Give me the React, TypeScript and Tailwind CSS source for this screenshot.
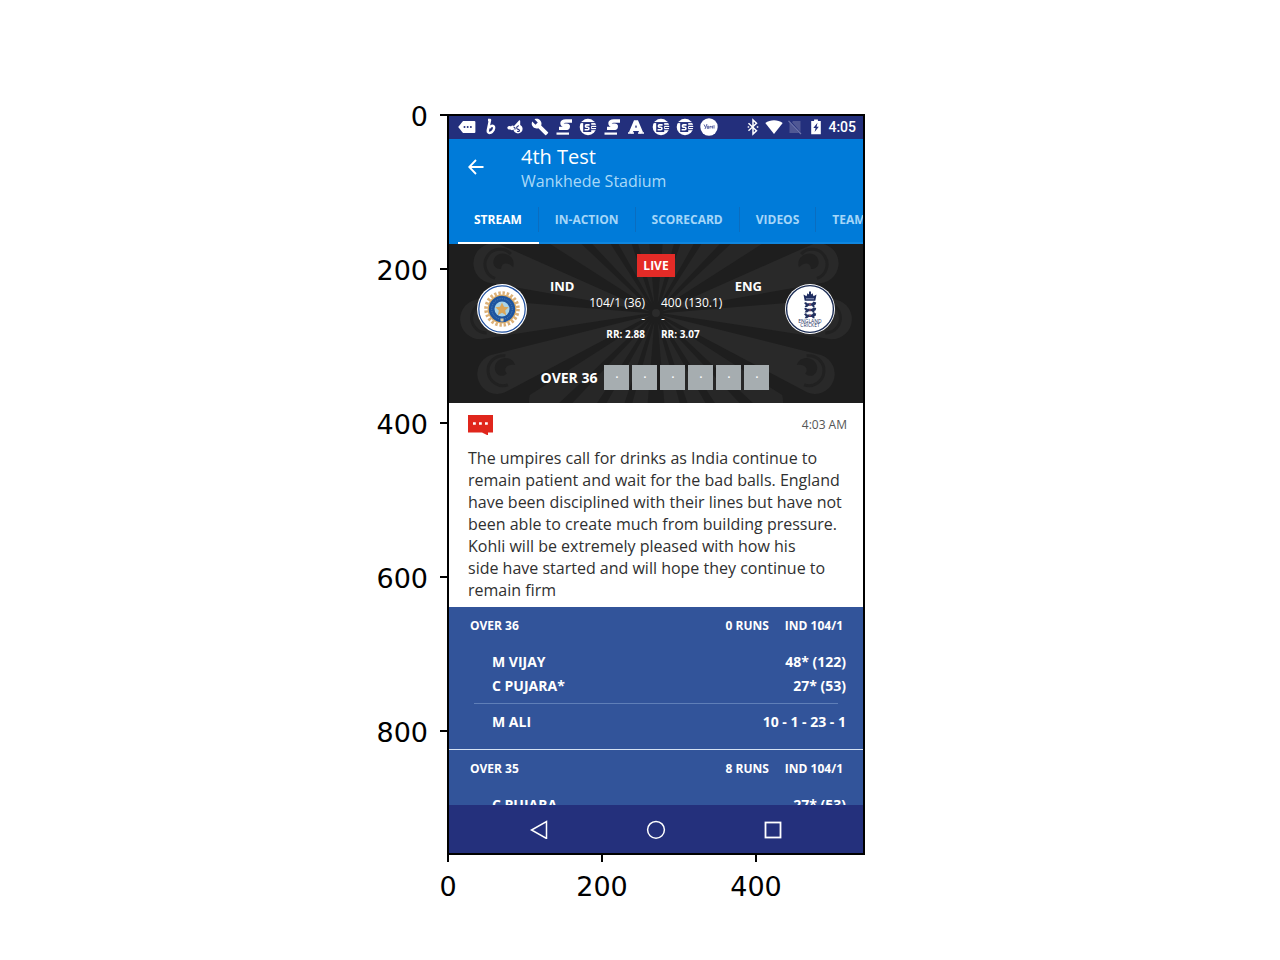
import React from "react";

const SANS = "font-['Open_Sans','Noto_Sans',sans-serif]";

const yTicks = [0, 200, 400, 600, 800];
const xTicks = [0, 200, 400];
const tabs = ["STREAM", "IN-ACTION", "SCORECARD", "VIDEOS", "TEAMS"];

function MessageIcon() {
  return (
    <svg viewBox="0 0 18 18" className="size-[18px]" fill="#fff">
      <path d="M5 3h11.400a1 1 0 0 1 1 1v10a1 1 0 0 1-1 1H5L.2 9z" />
      <g fill="#232f7c">
        <circle cx="6.500" cy="9" r="1" />
        <circle cx="9.700" cy="9" r="1" />
        <circle cx="12.900" cy="9" r="1" />
      </g>
    </svg>
  );
}

function BeatsIcon() {
  return (
    <svg viewBox="0 0 18 18" className="size-[18px]" fill="none" stroke="#fff" strokeWidth="2.500" strokeLinejoin="round">
      <path d="M6 2h2L5.800 12.500c-.4 2 1.200 2.800 2.800 2.200 2.600-.9 4.200-4.200 3.300-6.100-.9-1.700-3.300-.8-4.700 1.400" />
    </svg>
  );
}

function WeatherIcon() {
  return (
    <svg viewBox="0 0 18 18" className="size-[18px]" fill="#fff">
      <path d="M1.500 9c.8-1.200 2.300-1.400 3.400-.6.800-1 2.200-1.100 3.100-.3l5-5.600c.5-.5 1.200-.3 1.200.4v4c1.500.8 2.400 2.200 2.400 3.900 0 2.700-2 4.700-4.600 4.700-2.500 0-4.300-1.700-4.600-3.900-.9.900-2.300.8-3-.2C2.600 12 .9 10.700 1.500 9z" />
      <path d="M7.500 9c1.300.2 1.900 1.200 1.400 2.600M13 7.800c-2 .3-2.800 1.600-2 2.800.7 1 2.500.6 2.500 2 0 1-1.400 1.200-2.300.6" fill="none" stroke="#232f7c" strokeWidth="1.100" />
    </svg>
  );
}

function WrenchIcon() {
  return (
    <svg viewBox="0 0 24 24" className="size-[18px]" fill="#fff">
      <path d="M22.700 19l-9.100-9.100c.9-2.300.4-5-1.500-6.900-2-2-5-2.400-7.400-1.300L9 6 6 9 1.600 4.700C.4 7.100.9 10.100 2.900 12.100c1.900 1.900 4.600 2.400 6.900 1.500l9.100 9.100c.4.4 1 .4 1.400 0l2.300-2.300c.5-.4.5-1.100.1-1.400z" />
    </svg>
  );
}

function SlantSIcon() {
  return (
    <svg viewBox="0 0 18 18" className="size-[18px]" fill="none" stroke="#fff">
      <path d="M17 3h-6.200C8.500 3 7.200 3.700 7 5.100c-.2 1.300.7 2 2.400 2h2.200c1.300 0 1.900.5 1.700 1.500-.2 1.200-1.200 1.800-2.800 1.800H4" strokeWidth="3.400" />
      <path d="M1.500 15.600h12.500" strokeWidth="2.200" />
    </svg>
  );
}

function CoinSIcon() {
  return (
    <svg viewBox="0 0 18 18" className="size-[18px]">
      <circle cx="9" cy="9" r="8.300" fill="#fff" />
      <path d="M1.500 4.600h15M11.500 7.300H18M13 9.500h5M11.500 11.700H18" stroke="#232f7c" strokeWidth="1" />
      <rect x="4.200" y="4.700" width="8" height="9.300" fill="#232f7c" />
      <path d="M10.600 6.900H7.400c-1.300 0-1.300 2.300 0 2.300h1.400c1.500 0 1.500 2.600 0 2.600H5.600" fill="none" stroke="#fff" strokeWidth="1.600" />
    </svg>
  );
}

function LetterAIcon() {
  return (
    <svg viewBox="0 0 18 18" className="size-[18px]" fill="none" stroke="#fff">
      <path d="M3.600 15 8.200 4h1.600L14.400 15M5.500 11.300h7" strokeWidth="3.600" />
      <path d="M1 15h6M11 15h6" strokeWidth="1.600" />
    </svg>
  );
}

function DiscIcon() {
  return (
    <svg viewBox="0 0 18 18" className="size-[18px]">
      <circle cx="9" cy="9" r="8.700" fill="#fff" />
      <path d="M4 6.500l1.600 3M7 6l-2 5M7.300 8.200h1.400v2.200H7.300zM10 10.500V8l1.200 1L12.400 8v2.500M14 7.200v3.300" fill="none" stroke="#5a64a3" strokeWidth="1" />
    </svg>
  );
}

function BluetoothIcon() {
  return (
    <svg viewBox="0 0 18 18" className="size-[18px]" fill="none" stroke="#fff" strokeWidth="1.500">
      <path d="M4.500 5.200l8 7.500L9 16V2l3.500 3.300-8 7.500" />
      <path d="M3.700 9h1.500M12.800 9h1.500" />
    </svg>
  );
}

function WifiIcon() {
  return (
    <svg viewBox="0 0 18 18" className="size-[18px]" fill="#fff">
      <path d="M.3 5C5.300 1.300 12.700 1.300 17.700 5L9 16z" />
    </svg>
  );
}

function NoSimIcon() {
  return (
    <svg viewBox="0 0 18 18" className="size-[18px]">
      <path d="M3.500 4.500 13 15H3.500zM7 3h7.500v11L6 4.300z" fill="#505894" />
      <path d="M2.500 2.800 15 16" stroke="#7077ac" strokeWidth="1.200" />
    </svg>
  );
}

function BatteryIcon() {
  return (
    <svg viewBox="0 0 18 18" className="size-[18px]">
      <path d="M4.200 3h2.900V1.600h3.800V3h2.900v13.200H4.200z" fill="#fff" />
      <path d="M10.500 4.800 6.300 10h2.300l-1 4 4.200-5.200H9.600z" fill="#232f7c" />
    </svg>
  );
}

function IndiaCrest() {
  return (
    <svg viewBox="0 0 50 50" className="size-[50px]" role="img" aria-label="India">
      <circle cx="25" cy="25" r="25" fill="#fff" />
      <circle cx="25" cy="25" r="23.200" fill="none" stroke="#1f4f9e" strokeWidth="1.200" />
      <circle cx="25" cy="25" r="16" fill="none" stroke="#dbb078" strokeWidth="3.600" strokeDasharray="2.400 1.790" />
      <circle cx="25" cy="25" r="14.500" fill="#dcae6a" />
      <circle cx="25" cy="25" r="13.200" fill="#1d549f" />
      <circle cx="25" cy="25" r="10.300" fill="none" stroke="#5080b8" strokeWidth="1" strokeDasharray="1.200 1.200" />
      <circle cx="25" cy="25" r="7.500" fill="#a9d3e6" />
      <path d="M25 18.500l2 4.300 4.700.5-3.500 3.200 1 4.700-4.200-2.400-4.200 2.400 1-4.700-3.500-3.200 4.700-.5z" fill="#dba658" />
      <path d="M23.500 34.500h3v3h-3z" fill="#d9c7a0" />
    </svg>
  );
}

function Lion({ y }: { y: number }) {
  return (
    <g transform={`translate(19 ${y})`}>
      <path d="M0 1.500 2 .3l1 1.300h5L9.500 0l2.700.8-.5 2.200-1.500.7.500 1.800H8.800L8 4.100H4.800L3 5.400H.6l1.200-2z" fill="#22305f" />
      <circle cx="6" cy="2.800" r=".8" fill="#b75064" />
    </g>
  );
}

function EnglandCrest() {
  return (
    <svg viewBox="0 0 50 50" className="size-[50px]" role="img" aria-label="England Cricket">
      <circle cx="25" cy="25" r="25" fill="#fff" />
      <circle cx="25" cy="25" r="23.400" fill="none" stroke="#1c2d55" strokeWidth="1.400" />
      <path d="M18.500 10.500l3 1.700 1-3 1.500 1.300V7.500h2v3l1.500-1.300 1 3 3-1.700-1.200 6.300H19.700z" fill="#1f2d60" />
      <path d="M21 14.800h8" stroke="#c9d0e4" strokeWidth=".7" />
      <Lion y={17.600} />
      <Lion y={23.200} />
      <Lion y={28.800} />
      <text x="25" y="39" textAnchor="middle" fontSize="5" fill="#22305f" className={SANS}>ENGLAND</text>
      <text x="25" y="43" textAnchor="middle" fontSize="5" fill="#22305f" className={SANS}>CRICKET</text>
    </svg>
  );
}

function Plume({ angle, length, radius }: { angle: number; length: number; radius: number }) {
  const neck = length - radius;
  return (
    <g transform={`rotate(${angle})`}>
      <path d={`M6 0L${neck} ${-radius}A${radius} ${radius} 0 0 1 ${neck} ${radius}Z`} fill="#292929" />
      <path d={`M${neck - 14} ${-radius + 6}A${radius - 5} ${radius - 5} 0 1 1 ${neck - 6} ${radius - 6}`} fill="none" stroke="#212121" strokeWidth="3" />
      <path d={`M${neck - 20} -2c0-12 16-14 20-5 3 8-4 13-9 10 2-6-4-9-11-5z`} fill="#202020" />
    </g>
  );
}

function PlumeSide() {
  return (
    <g>
      <Plume angle={-17} length={190} radius={20} />
      <Plume angle={2} length={196} radius={20} />
      <Plume angle={21} length={190} radius={20} />
    </g>
  );
}

function Backdrop() {
  const rays = [38, 52, 66, 80, 100, 114, 128, 142, 218, 232, 246, 260, 280, 294, 308, 322];
  return (
    <svg viewBox="0 0 414 159" preserveAspectRatio="xMidYMid slice" className="absolute inset-0 size-full" aria-hidden="true">
      <rect width="414" height="159" fill="#1e1e1e" />
      <g transform="translate(207 69)">
        <PlumeSide />
        <g transform="scale(-1 1)">
          <PlumeSide />
        </g>
        {rays.map((angle) => (
          <path key={angle} d="M10 0 150-13Q166 0 150 13z" fill="#272727" transform={`rotate(${angle})`} />
        ))}
        <circle r="4" fill="#2b2b2b" />
      </g>
    </svg>
  );
}

function StatusBar() {
  return (
    <div className="flex h-[23px] items-center justify-between bg-[#232f7c] pr-[7px] pb-[2px] pl-[6px]">
      <div className="grid w-[266px] grid-cols-11 justify-items-center">
        <MessageIcon />
        <BeatsIcon />
        <WeatherIcon />
        <WrenchIcon />
        <SlantSIcon />
        <CoinSIcon />
        <SlantSIcon />
        <LetterAIcon />
        <CoinSIcon />
        <CoinSIcon />
        <DiscIcon />
      </div>
      <div className="flex items-center gap-[3px]">
        <BluetoothIcon />
        <WifiIcon />
        <NoSimIcon />
        <BatteryIcon />
        <span className="font-['Roboto',sans-serif] text-[14px] leading-5 font-medium text-white">4:05</span>
      </div>
    </div>
  );
}

function Header() {
  return (
    <header className="bg-[#007bd9] pt-[6px]">
      <div className="flex items-center pl-[19px]">
        <button type="button" aria-label="Back" className="mr-[37px] pb-1">
          <svg viewBox="0 0 16 16" className="size-4" fill="none" stroke="#fff" strokeWidth="1.800">
            <path d="M15.500 8H1.500M8 1 1.200 8 8 15" />
          </svg>
        </button>
        <div>
          <h1 className="text-[20px] leading-6 text-white">4th Test</h1>
          <p className="text-[16px] leading-6 text-[#a9d9f8]">Wankhede Stadium</p>
        </div>
      </div>
      <nav className="mt-[14px] flex overflow-hidden pl-[9px]">
        {tabs.map((tab, i) => (
          <button
            key={tab}
            type="button"
            className={
              i === 0
                ? "h-[37px] shrink-0 border-b-2 border-white pb-[10px] text-[12px] font-bold text-white"
                : "h-[37px] shrink-0 border-b-2 border-[#0f86df] pb-[10px] text-[12px] font-bold text-[#a5d6f8]"
            }
          >
            <span className="block border-r border-[#0a6dc0] px-4 leading-[25px]">{tab}</span>
          </button>
        ))}
      </nav>
    </header>
  );
}

function Scoreboard() {
  return (
    <section className="relative overflow-hidden text-white">
      <Backdrop />
      <div className="relative flex flex-col items-center pt-[10px] pb-[13px]">
        <span className="h-[23px] bg-[#e42b27] px-[6px] text-[12px] leading-6 font-bold">LIVE</span>
        <div className="flex w-full items-center justify-between px-7">
          <IndiaCrest />
          <div className="flex gap-4">
            <div className="w-[95px] text-right">
              <p className="text-left text-[13px] leading-[18px] font-bold">IND</p>
              <p className="text-[12px] leading-4">104/1 (36)</p>
              <p className="text-[12px] leading-4">-</p>
              <p className="text-[10px] leading-[14px] font-bold">RR: 2.88</p>
            </div>
            <div className="w-[101px]">
              <p className="text-right text-[13px] leading-[18px] font-bold">ENG</p>
              <p className="text-[12px] leading-4">400 (130.1)</p>
              <p className="text-[12px] leading-4">-</p>
              <p className="text-[10px] leading-[14px] font-bold">RR: 3.07</p>
            </div>
          </div>
          <EnglandCrest />
        </div>
        <div className="mt-6 flex items-center gap-[7px] pr-[2px]">
          <span className="text-[14px] leading-5 font-bold">OVER 36</span>
          <div className="flex gap-[3px]">
            {[1, 2, 3, 4, 5, 6].map((ball) => (
              <span key={ball} className="size-[25px] bg-[#a6adb0] text-center text-[10px] leading-6 font-bold">·</span>
            ))}
          </div>
        </div>
      </div>
    </section>
  );
}

function Commentary() {
  return (
    <article className="bg-white pt-3 pr-[14px] pb-[6px] pl-[19px] text-[#303030]">
      <div className="flex h-5 items-center justify-between">
        <svg viewBox="0 0 25 20" className="h-5 w-[25px]" aria-hidden="true">
          <path d="M0 0h25v17.500h-5V20.500L14 17.500H0z" fill="#e0261c" />
          <path d="M5 7.200h2.800v2.600H5zM11 7.200h2.800v2.600H11zM17 7.200h2.800v2.600H17z" fill="#fff" />
        </svg>
        <time className="pr-[2px] text-[12px] leading-5 text-[#555]">4:03 AM</time>
      </div>
      <p className="mt-3 text-[16px] leading-[22px]">
        The umpires call for drinks as India continue to remain patient and wait for the bad balls. England have been
        disciplined with their lines but have not been able to create much from building pressure. Kohli will be
        extremely pleased with how his
        <br />
        side have started and will hope they continue to remain firm
      </p>
    </article>
  );
}

function OverHeading({ over, runs, total }: { over: string; runs: string; total: string }) {
  return (
    <div className="flex h-[37px] items-center justify-between pr-5 pl-[21px] text-[12px] leading-5 font-bold">
      <h2>{over}</h2>
      <div className="flex gap-4">
        <span>{runs}</span>
        <span>{total}</span>
      </div>
    </div>
  );
}

function Figures({ rows }: { rows: [string, string][] }) {
  return (
    <div className="pr-[17px] pl-[43px]">
      <table className="w-full text-[14px] leading-6 font-bold">
        <tbody>
          {rows.map(([name, value]) => (
            <tr key={name}>
              <td className="p-0">{name}</td>
              <td className="p-0 text-right">{value}</td>
            </tr>
          ))}
        </tbody>
      </table>
    </div>
  );
}

function Overs() {
  return (
    <div className="bg-[#32549a] text-white">
      <section className="border-b border-[#d5e2f3] pb-[15px]">
        <OverHeading over="OVER 36" runs="0 RUNS" total="IND 104/1" />
        <div className="pt-[6px]">
          <Figures rows={[["M VIJAY", "48* (122)"], ["C PUJARA*", "27* (53)"]]} />
        </div>
        <hr className="mx-[25px] mt-[5px] mb-[6px] border-[#5f7fb8]" />
        <Figures rows={[["M ALI", "10 - 1 - 23 - 1"]]} />
      </section>
      <section className="h-[55px] overflow-hidden">
        <OverHeading over="OVER 35" runs="8 RUNS" total="IND 104/1" />
        <div className="pt-[6px]">
          <Figures rows={[["C PUJARA", "27* (53)"]]} />
        </div>
      </section>
    </div>
  );
}

function SystemNav() {
  return (
    <nav className="grid h-12 grid-cols-3 bg-[#24307c] px-8">
      <button type="button" aria-label="Back" className="flex items-center justify-center">
        <svg viewBox="0 0 20 20" className="size-5" fill="none" stroke="#fff" strokeWidth="1.500">
          <path d="M17.500 2.500v17L2.500 11z" />
        </svg>
      </button>
      <button type="button" aria-label="Home" className="flex items-center justify-center">
        <svg viewBox="0 0 20 20" className="size-5" fill="none" stroke="#fff" strokeWidth="1.500">
          <circle cx="10" cy="10.800" r="8.400" />
        </svg>
      </button>
      <button type="button" aria-label="Recent apps" className="flex items-center justify-center">
        <svg viewBox="0 0 20 20" className="size-5" fill="none" stroke="#fff" strokeWidth="1.800">
          <rect x="2.500" y="3.500" width="15" height="15" />
        </svg>
      </button>
    </nav>
  );
}

export default function App() {
  return (
    <main className={`min-h-screen bg-white pl-8 ${SANS}`}>
      <div className="grid grid-cols-[1fr_418px_1fr]">
        <div className="flex flex-col pt-[38px] font-['DejaVu_Sans',sans-serif] text-[27px] leading-8 text-black">
          {yTicks.map((tick) => (
            <div key={tick} className="flex h-[154px] items-center justify-end gap-3">
              <span className="pt-1">{tick}</span>
              <span className="h-[2px] w-[7px] bg-black" />
            </div>
          ))}
        </div>
        <div className="pt-[114px]">
          <div className="border-2 border-black">
            <StatusBar />
            <Header />
            <Scoreboard />
            <Commentary />
            <Overs />
            <SystemNav />
          </div>
          <div className="-mx-[76px] flex font-['DejaVu_Sans',sans-serif] text-[27px] leading-8 text-black">
            {xTicks.map((tick) => (
              <div key={tick} className="flex w-[154px] flex-col items-center gap-[9px]">
                <span className="h-[7px] w-[2px] bg-black" />
                <span>{tick}</span>
              </div>
            ))}
          </div>
        </div>
      </div>
    </main>
  );
}
